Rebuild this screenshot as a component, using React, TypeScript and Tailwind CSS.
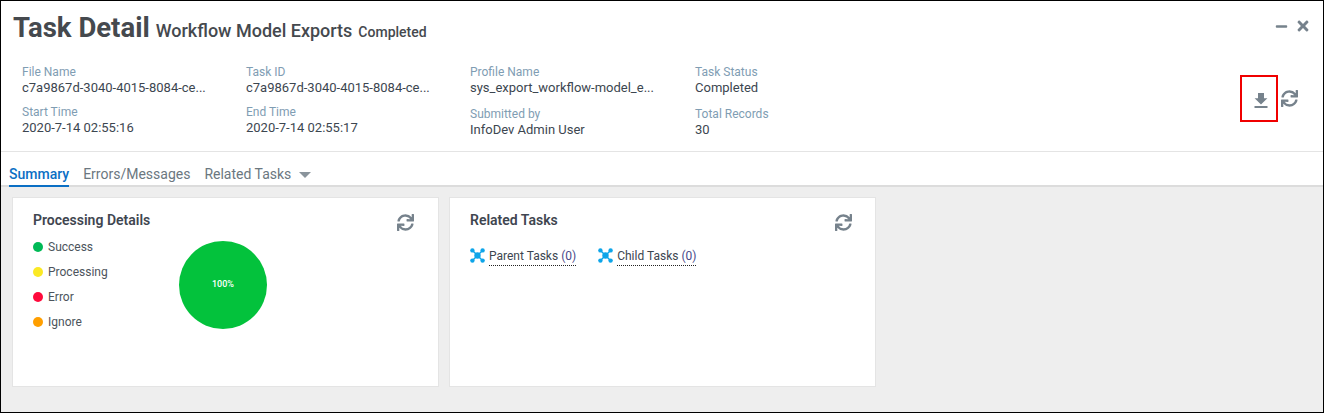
import { FaMinus, FaTimes, FaSync } from 'react-icons/fa';

const meta = [
  {
    gap: 'gap-[9px]',
    width: 'w-[224px]',
    items: [
      { label: 'File Name', value: 'c7a9867d-3040-4015-8084-ce...' },
      { label: 'Start Time', value: '2020-7-14 02:55:16' },
    ],
  },
  {
    gap: 'gap-[9px]',
    width: 'w-[224px]',
    items: [
      { label: 'Task ID', value: 'c7a9867d-3040-4015-8084-ce...' },
      { label: 'End Time', value: '2020-7-14 02:55:17' },
    ],
  },
  {
    gap: 'gap-[11px]',
    width: 'w-[225px]',
    items: [
      { label: 'Profile Name', value: 'sys_export_workflow-model_e...' },
      { label: 'Submitted by', value: 'InfoDev Admin User' },
    ],
  },
  {
    gap: 'gap-[11px]',
    width: 'w-[224px]',
    items: [
      { label: 'Task Status', value: 'Completed' },
      { label: 'Total Records', value: '30' },
    ],
  },
];

const legend = [
  { label: 'Success', color: 'bg-[#00b956]' },
  { label: 'Processing', color: 'bg-[#fbe925]' },
  { label: 'Error', color: 'bg-[#ff0a3c]' },
  { label: 'Ignore', color: 'bg-[#ff9f00]' },
];

function NodesIcon() {
  return (
    <svg viewBox="0 0 15 15" className="h-[15px] w-[15px] shrink-0 text-[#0ea5e9]" fill="currentColor" stroke="currentColor">
      <path d="M2.5 2.5 L12.5 12.5 M12.5 2.5 L2.5 12.5" strokeWidth="1.4" />
      <circle cx="7.5" cy="7.5" r="3.2" stroke="none" />
      <circle cx="2.4" cy="2.4" r="2.2" stroke="none" />
      <circle cx="12.6" cy="2.4" r="2.2" stroke="none" />
      <circle cx="2.4" cy="12.6" r="2.2" stroke="none" />
      <circle cx="12.6" cy="12.6" r="2.2" stroke="none" />
    </svg>
  );
}

function DownloadIcon() {
  return (
    <svg viewBox="0 0 14 15" className="h-[15px] w-[14px]" fill="currentColor">
      <path d="M4 0h6v5.2h3.4L7 11.4 0.6 5.2H4z" />
      <rect x="0.5" y="13" width="13" height="2" />
    </svg>
  );
}

function TaskLink({ name }: { name: string }) {
  return (
    <div className="flex items-start gap-[4px]">
      <NodesIcon />
      <span className="mt-[1px] border-b border-dotted border-[#222] pb-[2px] text-[12px] leading-[14px] text-[#3c4650]">
        {name} <span className="text-[#4a4a8a]">(0)</span>
      </span>
    </div>
  );
}

export default function App() {
  return (
    <div className="flex h-[413px] w-[1324px] flex-col border border-black bg-white font-['Roboto',sans-serif]">
      {/* Header */}
      <div className="flex h-[151px] shrink-0 flex-col border-b border-[#e4e4e4] pl-[12px] pr-[13px]">
        <div className="flex items-start justify-between">
          <h1 className="mt-[10px] flex items-baseline text-[#45494e]">
            <span className="text-[27.5px] leading-[34px] font-bold">Task Detail</span>
            <span className="ml-[6px] text-[18px] font-medium">Workflow Model Exports</span>
            <span className="ml-[6px] text-[14px] font-medium">Completed</span>
          </h1>
          <div className="mt-[17px] flex items-center gap-[8px] text-[#76828c]">
            <FaMinus className="h-[13px] w-[13px]" />
            <FaTimes className="h-[16px] w-[14px]" />
          </div>
        </div>
        <div className="flex flex-1 items-start">
          <div className="mt-[19px] ml-[9px] flex">
            {meta.map((col, i) => (
              <div key={i} className={`flex flex-col ${col.width} ${col.gap}`}>
                {col.items.map((item) => (
                  <div key={item.label} className="flex flex-col">
                    <span className="text-[12px] leading-[16px] text-[#7f9db3]">{item.label}</span>
                    <span className="text-[13px] leading-[15px] text-[#3c4650]">{item.value}</span>
                  </div>
                ))}
              </div>
            ))}
          </div>
          <div className="mt-[30px] mr-[12px] ml-auto flex items-center text-[#76828c]">
            <div className="flex h-[47px] w-[38px] items-center justify-center border-2 border-[#f00000] pt-[3px] pl-[4px]">
              <DownloadIcon />
            </div>
            <FaSync className="ml-[3px] h-[17px] w-[17px]" />
          </div>
        </div>
      </div>

      {/* Tabs */}
      <div className="flex h-[35px] shrink-0 items-end gap-[14px] border-b-2 border-[#dcdcdc] pl-[8px] text-[14px] leading-[16px] text-[#6b7780]">
        <span className="-mb-[2px] border-b-2 border-[#0b6fc4] pb-[3px] font-medium text-[#0b6fc4]">Summary</span>
        <span className="pb-[3px]">Errors/Messages</span>
        <span className="flex items-center gap-[8px] pb-[3px]">
          Related Tasks
          <span className="mt-[2px] h-0 w-0 border-x-[6px] border-t-[6px] border-x-transparent border-t-[#8a949c]" />
        </span>
      </div>

      {/* Cards */}
      <div className="flex flex-1 items-start gap-[10px] bg-[#eeeeee] pt-[10px] pl-[11px]">
        <section className="relative h-[190px] w-[427px] border border-[#e4e4e4] bg-white pt-[14px] pl-[20px]">
          <h2 className="text-[14px] leading-[17px] font-semibold text-[#3f4650]">Processing Details</h2>
          <FaSync className="absolute top-[16px] right-[24px] h-[17px] w-[17px] text-[#76828c]" />
          <div className="mt-[10px] flex items-start">
            <ul className="flex w-[146px] flex-col gap-[10px]">
              {legend.map((l) => (
                <li key={l.label} className="flex h-[15px] items-center gap-[5px] text-[12px] text-[#4c545c]">
                  <span className={`h-[10px] w-[10px] rounded-full ${l.color}`} />
                  {l.label}
                </li>
              ))}
            </ul>
            <div className="mt-[2px] flex h-[88px] w-[88px] items-center justify-center rounded-full bg-[#03c23c] text-[9px] font-medium text-white">
              100%
            </div>
          </div>
        </section>
        <section className="relative h-[190px] w-[427px] border border-[#e4e4e4] bg-white pt-[14px] pl-[20px]">
          <h2 className="text-[14px] leading-[17px] font-semibold text-[#3f4650]">Related Tasks</h2>
          <FaSync className="absolute top-[16px] right-[23px] h-[17px] w-[17px] text-[#76828c]" />
          <div className="mt-[19px] flex gap-[22px]">
            <TaskLink name="Parent Tasks" />
            <TaskLink name="Child Tasks" />
          </div>
        </section>
      </div>
    </div>
  );
}
